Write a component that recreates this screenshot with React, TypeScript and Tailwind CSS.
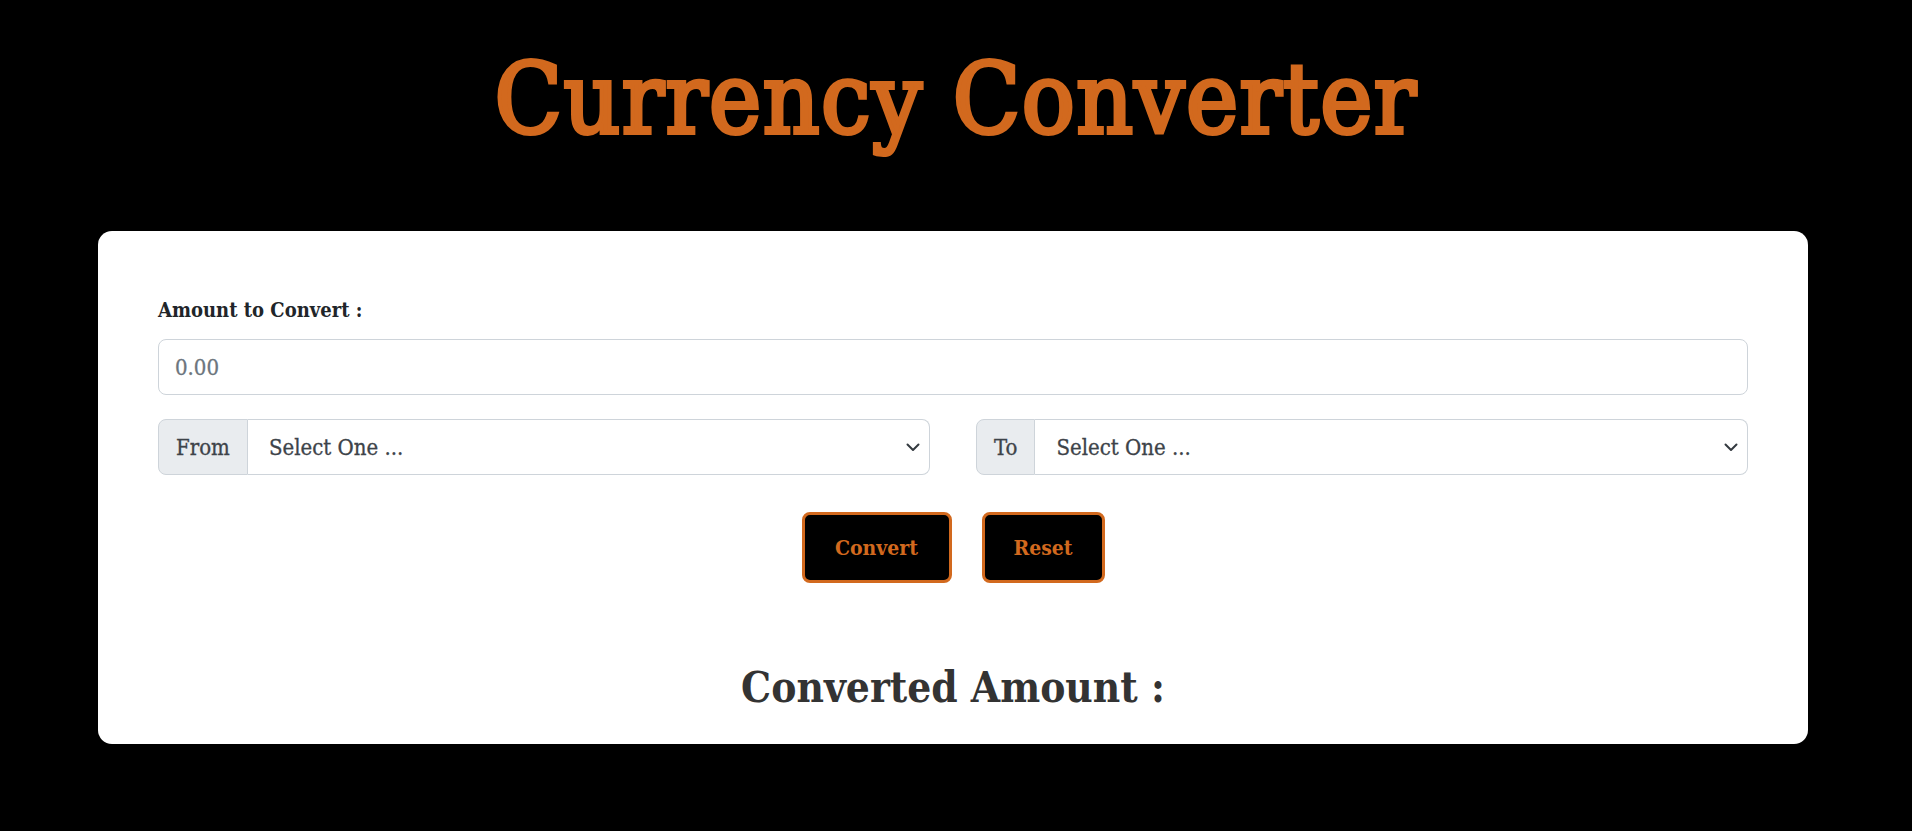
import { useState } from 'react'

const FONT = 'font-["DejaVu_Serif_Condensed","DejaVu_Serif",serif]'

function Chevron() {
  return (
    <svg
      className="pointer-events-none absolute right-[9px] top-1/2 -translate-y-1/2"
      width="16"
      height="16"
      viewBox="0 0 16 16"
      fill="none"
    >
      <path
        d="M2.5 5.5 8 11l5.5-5.5"
        stroke="#343a40"
        strokeWidth="2"
        strokeLinecap="round"
        strokeLinejoin="round"
      />
    </svg>
  )
}

function CurrencySelect({ label, value, onChange }: { label: string; value: string; onChange: (v: string) => void }) {
  return (
    <div className="flex h-[56px]">
      <span className="flex items-center rounded-l-[8px] border border-[#ced4da] bg-[#e9ecef] px-[17px] text-[22px] text-[#3d4349] [-webkit-text-stroke:0.3px_#3d4349]">
        {label}
      </span>
      <div className="relative flex-1">
        <select
          value={value}
          onChange={(e) => onChange(e.target.value)}
          className={`${FONT} h-full w-full appearance-none rounded-r-[8px] border border-l-0 border-[#ced4da] bg-white pl-[21px] text-[22px] text-[#3d4349] outline-none [-webkit-text-stroke:0.3px_#3d4349]`}
        >
          <option value="">Select One ...</option>
          <option value="USD">USD</option>
          <option value="EUR">EUR</option>
          <option value="GBP">GBP</option>
          <option value="INR">INR</option>
        </select>
        <Chevron />
      </div>
    </div>
  )
}

export default function App() {
  const [amount, setAmount] = useState('')
  const [from, setFrom] = useState('')
  const [to, setTo] = useState('')

  const reset = () => {
    setAmount('')
    setFrom('')
    setTo('')
  }

  return (
    <div className={`${FONT} min-h-[831px] bg-black pt-[50px]`}>
      <h1 className="text-center text-[98px] leading-none tracking-[1.5px] text-[#d2691e] [-webkit-text-stroke:4px_#d2691e]">
        Currency Converter
      </h1>

      <div className="ml-[98px] mt-[83px] w-[1710px] rounded-[14px] bg-white px-[60px] pb-[35px] pt-[65px]">
        <label className="block text-[20px] font-bold leading-[28px] text-[#212529]">Amount to Convert :</label>
        <input
          value={amount}
          onChange={(e) => setAmount(e.target.value)}
          placeholder="0.00"
          className={`${FONT} mt-[15px] block h-[56px] w-full rounded-[8px] border border-[#ced4da] px-4 text-[22px] text-[#212529] outline-none placeholder:text-[#6c757d] [-webkit-text-stroke:0.3px_#6c757d]`}
        />

        <div className="mt-6 grid grid-cols-2 gap-[46px]">
          <CurrencySelect label="From" value={from} onChange={setFrom} />
          <CurrencySelect label="To" value={to} onChange={setTo} />
        </div>

        <div className="mt-[37px] flex justify-center gap-[30px]">
          <button className={`${FONT} h-[71px] w-[150px] rounded-[8px] border-[3px] border-[#d2691e] bg-black text-[21px] font-bold text-[#d2691e]`}>
            Convert
          </button>
          <button
            onClick={reset}
            className={`${FONT} h-[71px] w-[123px] rounded-[8px] border-[3px] border-[#d2691e] bg-black text-[21px] font-bold text-[#d2691e]`}
          >
            Reset
          </button>
        </div>

        <h2 className="mt-[84px] text-center text-[42px] font-bold leading-none text-[#333333]">Converted Amount :</h2>
      </div>
    </div>
  )
}
